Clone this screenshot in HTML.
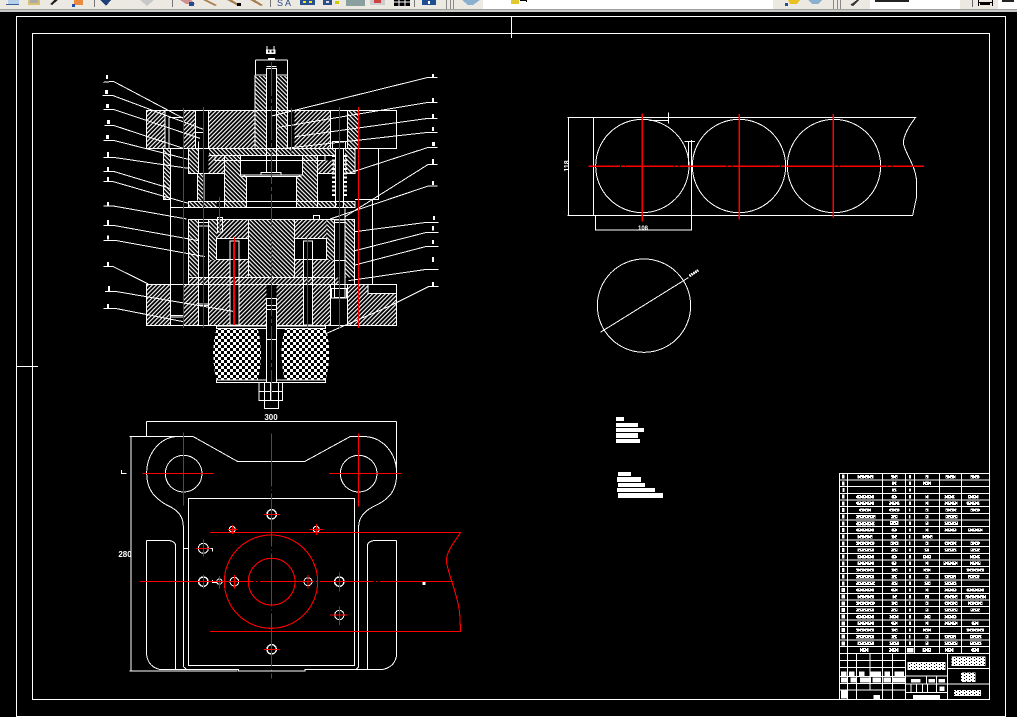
<!DOCTYPE html>
<html><head><meta charset="utf-8"><title>CAD</title>
<style>
html,body{margin:0;padding:0;background:#000;width:1017px;height:717px;overflow:hidden}
svg{display:block;position:absolute;left:0;top:0}
text{font-family:"Liberation Sans",sans-serif;fill:#fff}
</style></head><body>
<svg width="1017" height="717" viewBox="0 0 1017 717" xmlns="http://www.w3.org/2000/svg">
<defs>
<pattern id="h1" patternUnits="userSpaceOnUse" width="9" height="9" patternTransform="rotate(45)"><rect width="9" height="9" fill="#000"/><rect width="3.4" height="9" fill="#fff"/></pattern>
<pattern id="h2" patternUnits="userSpaceOnUse" width="9" height="9" patternTransform="rotate(-45)"><rect width="9" height="9" fill="#000"/><rect width="3.4" height="9" fill="#fff"/></pattern>
<pattern id="ck" patternUnits="userSpaceOnUse" width="18" height="18"><rect width="18" height="18" fill="#000"/><rect width="9" height="9" fill="#fff"/><rect x="9" y="9" width="9" height="9" fill="#fff"/></pattern>
<pattern id="sp" patternUnits="userSpaceOnUse" width="15" height="9"><rect width="15" height="9" fill="#fff"/><rect x="3" y="3" width="3" height="3" fill="#000"/><rect x="12" y="6" width="3" height="3" fill="#000"/></pattern>
</defs>
<rect width="1017" height="717" fill="#000"/>
<!-- toolbar -->
<rect width="1017" height="9" fill="#ece9e2"/>
<rect y="9" width="1017" height="1" fill="#a0a0a0"/>
<rect y="10" width="1017" height="2" fill="#c8c8c8"/>
<g shape-rendering="crispEdges">
<rect x="94" y="0" width="1" height="7" fill="#777"/><rect x="172" y="0" width="1" height="7" fill="#777"/><rect x="270" y="0" width="1" height="7" fill="#777"/><rect x="414" y="0" width="1" height="7" fill="#777"/>
<rect x="446" y="0" width="1" height="9" fill="#888"/><rect x="450" y="0" width="1" height="9" fill="#888"/><rect x="453" y="0" width="1" height="9" fill="#888"/>
<rect x="483" y="0" width="290" height="9" fill="#fff"/>
<rect x="870" y="0" width="90" height="9" fill="#fff"/>
<rect x="998" y="0" width="19" height="9" fill="#fff"/>
<rect x="833" y="0" width="1" height="9" fill="#888"/><rect x="837" y="0" width="1" height="9" fill="#888"/><rect x="840" y="0" width="1" height="9" fill="#888"/><rect x="972" y="0" width="1" height="7" fill="#666"/>
<rect x="8" y="0" width="11" height="4" fill="#b4d0ea"/><rect x="6" y="4" width="13" height="1" fill="#33609a"/>
<rect x="28" y="0" width="12" height="5" fill="#d8c070"/><rect x="30" y="0" width="8" height="3" fill="#aaa"/>
<path d="M52 5L58 0H54L50 4z" fill="#222"/>
<rect x="74" y="0" width="9" height="5" fill="#ea8a40"/><rect x="72" y="4" width="3" height="3" fill="#1f50b0"/>
<path d="M100 0h11l-5 6z" fill="#1f3f78"/>
<path d="M140 0h14l-7 6z" fill="#c8c8c8"/>
<path d="M180 0h11l4 4h-9z" fill="#d09090"/><rect x="189" y="2" width="5" height="4" fill="#1f4f8f"/>
<path d="M203 0h4l10 5-2 1z" fill="#a88050"/>
<path d="M227 0h5l8 5-2 1z" fill="#a88050"/><rect x="237" y="3" width="4" height="3" fill="#000"/>
<path d="M250 0h5l8 5-2 1z" fill="#a88050"/>
<text x="277" y="6" font-size="9" style="fill:#2a4a80">S</text>
<text x="285" y="6" font-size="9" style="fill:#2a4a80">A</text>
<rect x="300" y="0" width="15" height="5" fill="#2a4f8f"/><rect x="303" y="1" width="3" height="2" fill="#ee0"/><rect x="309" y="1" width="3" height="2" fill="#ee0"/>
<rect x="323" y="0" width="9" height="5" fill="#2a4f8f"/><rect x="326" y="1" width="3" height="2" fill="#ddd"/><rect x="335" y="1" width="4" height="3" fill="#cc0"/>
<rect x="346" y="0" width="19" height="6" fill="#8aa0a0"/>
<rect x="370" y="0" width="15" height="5" fill="#ccc"/><rect x="374" y="0" width="7" height="3" fill="#d04040"/>
<rect x="394" y="0" width="16" height="6" fill="#000"/><path d="M399 0v6M405 0v6M394 2h16" stroke="#fff" stroke-width="1" fill="none"/>
<rect x="422" y="0" width="14" height="5" fill="#1f4f90"/><rect x="428" y="1" width="2" height="3" fill="#fff"/>
<path d="M462 0h18l-7 5h-5z" fill="#8ab0d0"/>
<rect x="511" y="0" width="8" height="4" fill="#e0c830"/><rect x="520" y="0" width="7" height="1" fill="#000"/><rect x="526" y="0" width="1" height="2" fill="#000"/>
<path d="M788 0h12l-3 4h-7z" fill="#e8c020"/><rect x="785" y="3" width="3" height="3" fill="#1f4f90"/>
<path d="M808 0h14l-4 4h-6z" fill="#8ab0d0"/>
<path d="M850 5l7-5h2l-6 6z" fill="#333"/>
<rect x="875" y="0" width="34" height="2" fill="#222"/>
<rect x="978" y="2" width="14" height="1" fill="#000"/><rect x="978" y="0" width="1" height="6" fill="#000"/><rect x="992" y="0" width="1" height="6" fill="#000"/><rect x="980" y="3" width="10" height="2" fill="#000"/>
<rect x="1002" y="0" width="12" height="2" fill="#222"/>
</g>

<g fill="none" stroke="#fff" stroke-width="1" shape-rendering="crispEdges">
<!-- frames -->
<path d="M16.5 16.5H1005.5V716.5H16.5Z"/>
<path d="M32.5 33.5H989.5V699.5H32.5Z"/>
<path d="M511.5 17V38M17 366.5H38"/>
</g>

<!-- upper section -->
<g transform="translate(95 40) scale(.33333)" fill="none" stroke="#fff" stroke-width="3" shape-rendering="crispEdges">
<g stroke="none">
<rect x="155" y="212" width="55" height="113" fill="url(#h1)"/>
<rect x="265" y="212" width="37" height="113" fill="url(#h1)"/>
<rect x="340" y="212" width="140" height="113" fill="url(#h1)"/>
<rect x="598" y="212" width="110" height="113" fill="url(#h1)"/>
<rect x="757" y="212" width="33" height="113" fill="url(#h2)"/>
<rect x="481" y="108" width="34" height="217" fill="url(#h2)"/>
<rect x="545" y="108" width="33" height="217" fill="url(#h2)"/>
<rect x="342" y="326" width="378" height="21" fill="url(#h2)"/>
<rect x="280" y="326" width="30" height="74" fill="url(#h2)"/>
<rect x="340" y="347" width="50" height="55" fill="url(#h1)"/>
<rect x="388" y="347" width="65" height="155" fill="url(#h2)"/>
<rect x="603" y="347" width="65" height="155" fill="url(#h2)"/>
<rect x="668" y="362" width="50" height="40" fill="url(#h1)"/>
<rect x="750" y="326" width="30" height="74" fill="url(#h2)"/>
<rect x="205" y="326" width="22" height="152" fill="url(#h2)"/>
<rect x="307" y="400" width="20" height="82" fill="url(#h2)"/>
<rect x="280" y="484" width="85" height="18" fill="url(#h2)"/>
<rect x="668" y="484" width="58" height="18" fill="url(#h2)"/>
<rect x="742" y="484" width="38" height="18" fill="url(#h2)"/>
<rect x="436" y="347" width="186" height="58" fill="#000"/>
</g>
<!-- plate outlines -->
<rect x="155" y="211" width="750" height="115"/>
<path d="M210 211V326M222 232H265M222 232V326M265 211V326"/>
<path d="M302 211V326M340 211V326M480 105V326M578 105V326M707 211V326M757 211V326"/>
<path d="M481 60H578M481 60V105M578 60V105M481 105H515M545 105H578"/>
<path d="M515 85H545V398H515ZM515 80H545"/>
<path d="M498 398H558V405H498Z"/>
<path d="M205 326H280M205 326V478H227M227 326V570"/>
<path d="M280 326H780M342 347H720M780 326V400H750M280 326V400H310"/>
<path d="M752 326H850V478H780M832 478V570"/>
<path d="M436 347V405H622V347M440 405H620M440 410H620"/>
<path d="M455 410V502H605V410"/>
<path d="M388 347V502M668 347V502M310 400H388M668 400H720"/>
<path d="M280 484H780V502H280ZM227 502H780"/>
<path d="M307 400V482M327 400V482"/>
<path d="M310 305V400M326 305V400M302 278H326"/>
<path d="M712 305H752V326H712Z"/>
<path d="M722 326V502M745 326V502"/>
<path d="M360 347V362H690V347"/>
<path d="M655 526H674V538H655Z"/>
<path d="M227 538V570M832 538V570"/>
<path d="M750 505V570" />
<!-- springs -->
<path d="M716 345V475M750 345V475" stroke-width="11" stroke-dasharray="6 7"/>
<!-- dim label -->
<rect x="513" y="28" width="28" height="14" fill="#fff" stroke="none"/>
<rect x="519" y="32" width="5" height="5" fill="#000" stroke="none"/><rect x="530" y="32" width="5" height="5" fill="#000" stroke="none"/>
<path d="M516 18V28M537 18V28" stroke-width="3"/>
<rect x="519" y="54" width="21" height="8" fill="#fff" stroke="none"/>
<!-- leaders left -->
<path d="M25 127L55 124L265 235M22 166H52L325 268M25 208H55L315 295M28 257H58L265 325M25 301H55L280 358M25 352H55L280 385M25 394H55L225 445M25 425H55L280 490M25 498H55L275 537"/>
<!-- leaders right -->
<path d="M1028 112H1000L530 228M1028 187H1000L550 262M1028 235H1000L600 290M1028 277H1000L570 325M1028 322H1000L760 400M1028 373H1000L830 480L750 530M1028 438H1000L705 537"/>
<g fill="#fff" stroke="none">
<rect x="33" y="105" width="6" height="12"/><rect x="30" y="150" width="9" height="12"/><rect x="33" y="192" width="9" height="12"/><rect x="36" y="240" width="9" height="12"/><rect x="33" y="285" width="9" height="12"/><rect x="36" y="336" width="6" height="15"/><rect x="36" y="381" width="6" height="12"/><rect x="36" y="411" width="6" height="12"/><rect x="36" y="486" width="6" height="12"/><rect x="36" y="540" width="6" height="14"/>
<rect x="1011" y="102" width="6" height="10"/><rect x="1011" y="174" width="6" height="12"/><rect x="1011" y="222" width="6" height="12"/><rect x="1011" y="261" width="6" height="12"/><rect x="1011" y="306" width="9" height="12"/><rect x="1011" y="357" width="6" height="15"/><rect x="1011" y="423" width="6" height="12"/><rect x="1014" y="528" width="6" height="12"/>
</g>
</g>

<!-- lower section -->
<g transform="translate(95 210) scale(.33333)" fill="none" stroke="#fff" stroke-width="3" shape-rendering="crispEdges">
<g stroke="none">
<rect x="280" y="28" width="30" height="172" fill="url(#h2)"/>
<rect x="340" y="28" width="25" height="175" fill="url(#h2)"/>
<rect x="365" y="28" width="95" height="57" fill="url(#h1)"/>
<rect x="460" y="28" width="138" height="175" fill="url(#h2)"/>
<rect x="598" y="28" width="97" height="57" fill="url(#h1)"/>
<rect x="695" y="28" width="23" height="175" fill="url(#h2)"/>
<rect x="750" y="28" width="28" height="175" fill="url(#h2)"/>
<rect x="340" y="150" width="65" height="52" fill="url(#h1)"/>
<rect x="432" y="150" width="28" height="52" fill="url(#h1)"/>
<rect x="598" y="150" width="27" height="52" fill="url(#h1)"/>
<rect x="653" y="150" width="65" height="52" fill="url(#h1)"/>
<rect x="280" y="203" width="450" height="20" fill="url(#h1)"/>
<rect x="155" y="223" width="72" height="124" fill="url(#h1)"/>
<rect x="265" y="223" width="45" height="124" fill="url(#h1)"/>
<rect x="340" y="223" width="65" height="124" fill="url(#h1)"/>
<rect x="432" y="223" width="83" height="124" fill="url(#h1)"/>
<rect x="545" y="223" width="80" height="124" fill="url(#h1)"/>
<rect x="653" y="223" width="54" height="124" fill="url(#h1)"/>
<rect x="757" y="223" width="148" height="124" fill="url(#h1)"/>
<rect x="819" y="223" width="86" height="27" fill="#000"/>
<path d="M365 356H488C501 400 501 460 488 510H365C351 460 351 400 365 356Z" fill="url(#ck)"/>
<path d="M570 356H692C706 400 706 460 692 510H570C556 460 556 400 570 356Z" fill="url(#ck)"/>
</g>
<rect x="280" y="28" width="498" height="195"/>
<path d="M227 0V222M832 0V222M280 202H720"/>
<path d="M310 28V285M340 28V345M365 85H460V148H365ZM598 85H695V148H598Z"/>
<path d="M460 28V200M598 28V200"/>
<path d="M310 38H340M310 48H340"/>
<rect x="155" y="223" width="750" height="124"/>
<path d="M819 223V250H905M227 223V347M265 223V347M310 223V347M707 223V347M757 223V347"/>
<path d="M227 316H265M227 321H265M310 282H340M310 287H340"/>
<rect x="405" y="93" width="27" height="252"/>
<rect x="625" y="93" width="28" height="252"/>
<path d="M718 30H750V262H718Z M718 38H750 M718 152H750"/>
<rect x="710" y="236" width="44" height="28"/>
<path d="M368 22H382V66H368Z"/>
<path d="M364 348H692V356H364ZM364 510H692V518H364Z"/>
<rect x="515" y="265" width="30" height="253" fill="#000"/>
<path d="M515 286H545M515 298H545M515 388H545"/>
<path d="M492 518H563V572H492ZM508 518V572M550 518V572M527 518V572M492 545H563M508 572H550V596H508Z"/>
<path d="M25 46H55L310 92M25 91H60L330 140M25 170H55L160 222M30 244H60L420 305M25 295H60L265 335"/>
<path d="M1030 37H995L780 65M1030 67H995L780 122M1030 109H995L780 165M1030 178H995L760 212M1030 230H1000L880 290L690 372"/>
<g fill="#fff" stroke="none">
<rect x="36" y="30" width="6" height="15"/><rect x="36" y="76" width="6" height="12"/><rect x="36" y="156" width="6" height="12"/><rect x="39" y="228" width="6" height="15"/><rect x="36" y="282" width="6" height="12"/>
<rect x="1014" y="18" width="6" height="12"/><rect x="1011" y="48" width="6" height="14"/><rect x="1011" y="90" width="6" height="12"/><rect x="1011" y="141" width="6" height="15"/><rect x="1011" y="216" width="6" height="12"/>
</g>
</g>

<!-- section centre lines -->
<g fill="none" stroke="#f00" shape-rendering="crispEdges">
<path d="M183.5 108V328M203.5 107V328M339.5 107V328M358.5 107V328" stroke-width="1.1"/>
<path d="M219.5 197V232M234.5 237V325M307.5 237V328M291.5 108V153" stroke-width="1"/>
<path d="M271.5 62V400" stroke-width="1" stroke-dasharray="34 3 4 3"/>
<path d="M234 243V325" stroke-width="2"/>
</g>

<!-- strip layout -->
<g transform="translate(555 100) scale(.33333)" fill="none" stroke="#fff" stroke-width="3" shape-rendering="crispEdges">
<path d="M38 52H1082C1060 80 1045 110 1045 130C1050 160 1085 200 1085 250V290L1073 346H38"/>
<path d="M40 52V346M115 52V346M121 346V390H410V120M400 124V195M388 124H420"/>
<path d="M283 61H340M340 37V70"/>
<circle cx="262" cy="198" r="140"/><circle cx="552" cy="198" r="140"/><circle cx="837" cy="198" r="140"/>
<path d="M100 199H1107" stroke="#f00" stroke-width="3.5" stroke-dasharray="142 3 12 3" stroke-dashoffset="47"/>
<path d="M262 40V365M553 42V358M835 42V352" stroke="#f00" stroke-width="3.5"/>
<circle cx="267" cy="617" r="140"/>
<path d="M136 697L400 533"/>
<path d="M403 528L430 511" stroke-width="8" stroke-dasharray="5 2"/>
</g>
<text transform="translate(569 166) rotate(-90)" font-size="7" font-weight="bold" text-anchor="middle">118</text>
<text x="643" y="230" font-size="6" font-weight="bold" text-anchor="middle">108</text>

<!-- text blocks -->
<g fill="#fff" transform="translate(600 405) scale(.33333)" shape-rendering="crispEdges">
<rect x="48" y="36" width="24" height="12"/><rect x="48" y="54" width="66" height="12"/><rect x="48" y="69" width="84" height="12"/><rect x="48" y="84" width="66" height="15"/><rect x="48" y="102" width="72" height="12"/>
<rect x="54" y="201" width="39" height="12"/><rect x="51" y="216" width="72" height="15"/><rect x="54" y="234" width="81" height="12"/><rect x="51" y="249" width="114" height="12"/><rect x="54" y="264" width="135" height="15"/>
</g>

<!-- plan view -->
<g transform="translate(120 410) scale(.33333)" fill="none" stroke="#fff" stroke-width="3" shape-rendering="crispEdges">
<path d="M220 80L352 154H555L690 80H740C790 85 830 130 830 190C830 240 810 265 770 285C735 300 716 320 716 350V770L708 778H555V783H355V778H200L190 770V350C190 320 175 300 140 285C105 265 80 240 80 190C80 130 120 85 165 80Z"/>
<path d="M80 392H150Q167 395 167 410V778M80 392V735Q85 770 118 778H200"/>
<path d="M830 392H760Q742 395 742 410V778M830 392V735Q825 770 790 778H708"/>
<path d="M190 415H205"/>
<rect x="205" y="266" width="499" height="501"/>
<path d="M80 35H830M80 35V80M830 35V190"/>
<path d="M33 80V783M28 80H220M28 783H352"/>
<circle cx="191" cy="191" r="55"/><circle cx="716" cy="191" r="55"/>
<g stroke-width="4"><circle cx="455" cy="313" r="14"/><circle cx="250" cy="515" r="14"/><circle cx="658" cy="515" r="14"/><circle cx="455" cy="718" r="14"/></g>
<circle cx="337" cy="358" r="9"/><circle cx="589" cy="358" r="9"/><circle cx="250" cy="415" r="15"/><circle cx="298" cy="515" r="8"/><circle cx="343" cy="515" r="13"/><circle cx="564" cy="515" r="12"/><circle cx="658" cy="615" r="14"/>
<path d="M177 190H190V200M277 510V518H290M268 415H278V425M888 515H905" />
<rect x="908" y="516" width="9" height="9" fill="#fff" stroke="none"/>
<path d="M5 180V190H20" stroke-width="3"/>
<g stroke="#f00" stroke-width="3.3">
<circle cx="453" cy="515" r="140"/><circle cx="455" cy="515" r="70"/>
<path d="M60 515H860" stroke-dasharray="160 8 4 8"/><path d="M860 515H1000"/>
<path d="M455 70V805" stroke-dasharray="160 8 4 8"/>
<path d="M270 367H1022C1000 400 975 430 980 460C990 510 1020 570 1020 630L1022 664H270"/>
<path d="M68 191H282M627 191H843M191 67V287M716 70V290"/>
<path d="M432 313H480M455 295V332M322 358H352M337 345V372M568 358H610M589 342V375M228 415H272M250 388V440M343 495V535M324 515H360M298 498V535M564 495V535M546 515H582M658 487V545M640 515H678M630 615H682M658 590V645M432 718H480M455 695V740M250 495V535M218 515H272"/>
</g>
</g>
<text x="271" y="420" font-size="8" font-weight="bold" text-anchor="middle">300</text>
<text x="125" y="557" font-size="8" font-weight="bold" text-anchor="middle">280</text>

<!-- title block -->
<g transform="translate(835 470) scale(.33333)" shape-rendering="crispEdges">
<g fill="none" stroke="#fff" stroke-width="3">
<path d="M13 10H463V688H13Z"/>
<path d="M13 30H463M13 50H463M13 70H463M13 90H463M13 110H463M13 130H463M13 150H463M13 170H463M13 190H463M13 210H463M13 230H463M13 250H463M13 270H463M13 290H463M13 310H463M13 330H463M13 350H463M13 370H463M13 390H463M13 410H463M13 430H463M13 450H463M13 470H463M13 490H463M13 510H463M13 530H463M13 550H463"/>
<path d="M37 10V550M142 10V550M212 10V688M238 10V550M313 10V550M380 10V550M337 550V688"/>
<path d="M13 572H212M13 592H212M13 620H212M13 640H212M13 660H212"/>
<path d="M37 550V688M65 550V688M105 550V660M142 550V688M172 550V688"/>
<path d="M212 618H337M212 642H337M212 668H337M337 595H463M337 642H463"/>
<path d="M228 642V668M245 642V668M262 642V668M277 642V668M275 618V642M305 618V642M305 642V668"/>
</g>
<g fill="url(#sp)">
<path fill="#fff" d="M21 14h8v12h-8zM21 34h7v12h-7zM22 54h6v12h-6zM21 74h8v12h-8zM21 94h8v12h-8zM21 114h8v12h-8zM21 134h8v12h-8zM21 154h8v12h-8zM21 174h8v12h-8zM21 194h8v12h-8zM21 214h8v12h-8zM21 234h8v12h-8zM21 254h8v12h-8zM21 274h8v12h-8zM21 294h8v12h-8zM21 314h8v12h-8zM21 334h8v12h-8zM20 354h10v12h-10zM20 374h10v12h-10zM20 394h10v12h-10zM20 414h10v12h-10zM20 434h10v12h-10zM20 454h10v12h-10zM20 474h10v12h-10zM20 494h10v12h-10zM20 514h10v12h-10z"/>
<path d="M67 15h48v10h-48zM63 75h54v10h-54zM63 95h54v10h-54zM72 115h36v10h-36zM63 135h59v10h-59zM63 155h55v12h-55zM63 175h54v10h-54zM67 195h46v10h-46zM63 215h55v10h-55zM67 235h50v10h-50zM67 255h50v10h-50zM67 275h50v10h-50zM63 295h54v10h-54zM63 315h54v10h-54zM63 335h57v10h-57zM63 355h54v10h-54zM67 375h50v10h-50zM63 395h57v10h-57zM63 415h54v10h-54zM63 435h54v10h-54zM67 455h50v10h-50zM63 475h54v10h-54zM63 495h54v10h-54zM67 515h50v10h-50zM75 534h25v12h-25z"/>
<path d="M168 15h20v10h-20zM171 35h14v10h-14zM171 55h14v10h-14zM170 75h16v10h-16zM162 95h32v10h-32zM162 115h32v10h-32zM168 135h20v10h-20zM165 153h26v12h-26zM170 175h16v10h-16zM170 195h16v10h-16zM166 215h24v10h-24zM168 235h20v10h-20zM170 255h16v10h-16zM170 275h14v10h-14zM170 295h18v10h-18zM170 315h16v10h-16zM170 335h18v10h-18zM168 355h20v10h-20zM172 375h14v10h-14zM170 395h18v10h-18zM168 415h20v10h-20zM164 435h26v10h-26zM168 455h20v10h-20zM170 475h18v10h-18zM170 495h16v10h-16zM164 515h28v10h-28zM162 534h28v12h-28z"/>
<path fill="#fff" d="M222 15h6v10h-6zM222 35h6v10h-6zM222 55h6v10h-6zM222 75h6v10h-6zM222 95h6v10h-6zM222 115h4v10h-4zM222 135h4v10h-4zM222 155h6v10h-6zM222 175h6v10h-6zM222 195h4v10h-4zM222 215h4v10h-4zM222 235h6v10h-6zM222 255h6v10h-6zM222 275h6v10h-6zM222 295h6v10h-6zM222 315h6v10h-6zM222 335h6v10h-6zM222 355h6v10h-6zM222 375h6v10h-6zM222 395h4v10h-4zM222 415h6v10h-6zM222 435h6v10h-6zM222 455h6v10h-6zM222 475h6v10h-6zM222 495h4v10h-4zM222 515h6v10h-6zM216 534h20v14h-20z"/>
<path d="M272 15h9v10h-9zM264 35h24v10h-24zM272 75h9v10h-9zM272 95h9v10h-9zM272 115h9v10h-9zM272 135h9v10h-9zM272 155h9v10h-9zM272 175h9v10h-9zM262 195h30v10h-30zM272 215h9v10h-9zM268 235h14v10h-14zM264 255h24v10h-24zM272 275h9v10h-9zM265 295h22v10h-22zM272 315h9v10h-9zM268 335h18v10h-18zM272 355h9v10h-9zM270 375h12v10h-12zM272 395h9v10h-9zM272 415h9v10h-9zM268 435h18v10h-18zM272 455h9v10h-9zM264 475h24v10h-24zM272 495h9v10h-9zM272 515h9v10h-9zM262 534h26v12h-26z"/>
<path d="M331 15h30v10h-30zM329 75h30v10h-30zM329 95h38v10h-38zM331 115h34v10h-34zM331 135h36v10h-36zM329 155h40v10h-40zM329 175h36v10h-36zM329 215h36v10h-36zM329 235h36v10h-36zM325 275h42v10h-42zM329 315h34v10h-34zM329 335h36v10h-36zM329 355h36v10h-36zM329 375h38v10h-38zM329 395h38v10h-38zM329 415h38v10h-38zM329 435h36v10h-36zM329 455h38v10h-38zM329 495h34v10h-34zM329 515h38v10h-38zM330 534h26v12h-26z"/>
<path d="M407 15h26v10h-26zM399 75h32v10h-32zM395 95h38v10h-38zM407 115h28v10h-28zM399 175h44v10h-44zM407 215h28v10h-28zM407 235h28v10h-28zM405 255h30v10h-30zM405 275h32v10h-32zM395 295h52v10h-52zM399 315h34v10h-34zM395 355h52v10h-52zM391 375h62v10h-62zM399 395h44v10h-44zM407 415h28v10h-28zM409 455h22v10h-22zM395 475h52v10h-52zM405 495h34v10h-34zM405 515h34v10h-34zM408 534h24v12h-24z"/>
<path fill="#fff" d="M18 604h16v14h-16zM42 604h16v14h-16zM72 604h16v14h-16zM105 604h33v14h-33zM148 604h17v14h-17zM178 604h29v14h-29z"/>
<path fill="#fff" d="M18 622h18v15h-18zM46 622h20v15h-20zM75 622h33v15h-33zM112 622h26v15h-26zM145 622h23v15h-23zM172 622h38v15h-38z"/>
<path fill="#fff" d="M18 660h18v26h-18zM115 675h20v12h-20z"/>
<path d="M218 576h114v24h-114z"/>
<path fill="#fff" d="M228 627h29v11h-29zM280 627h20v11h-20zM311 627h19v11h-19zM313 650h15v13h-15zM234 675h81v13h-81z"/>
<path d="M350 560h102v28h-102zM378 608h44v28h-44zM357 660h81v18h-81z"/>
</g>
</g>
</svg>
</body></html>
